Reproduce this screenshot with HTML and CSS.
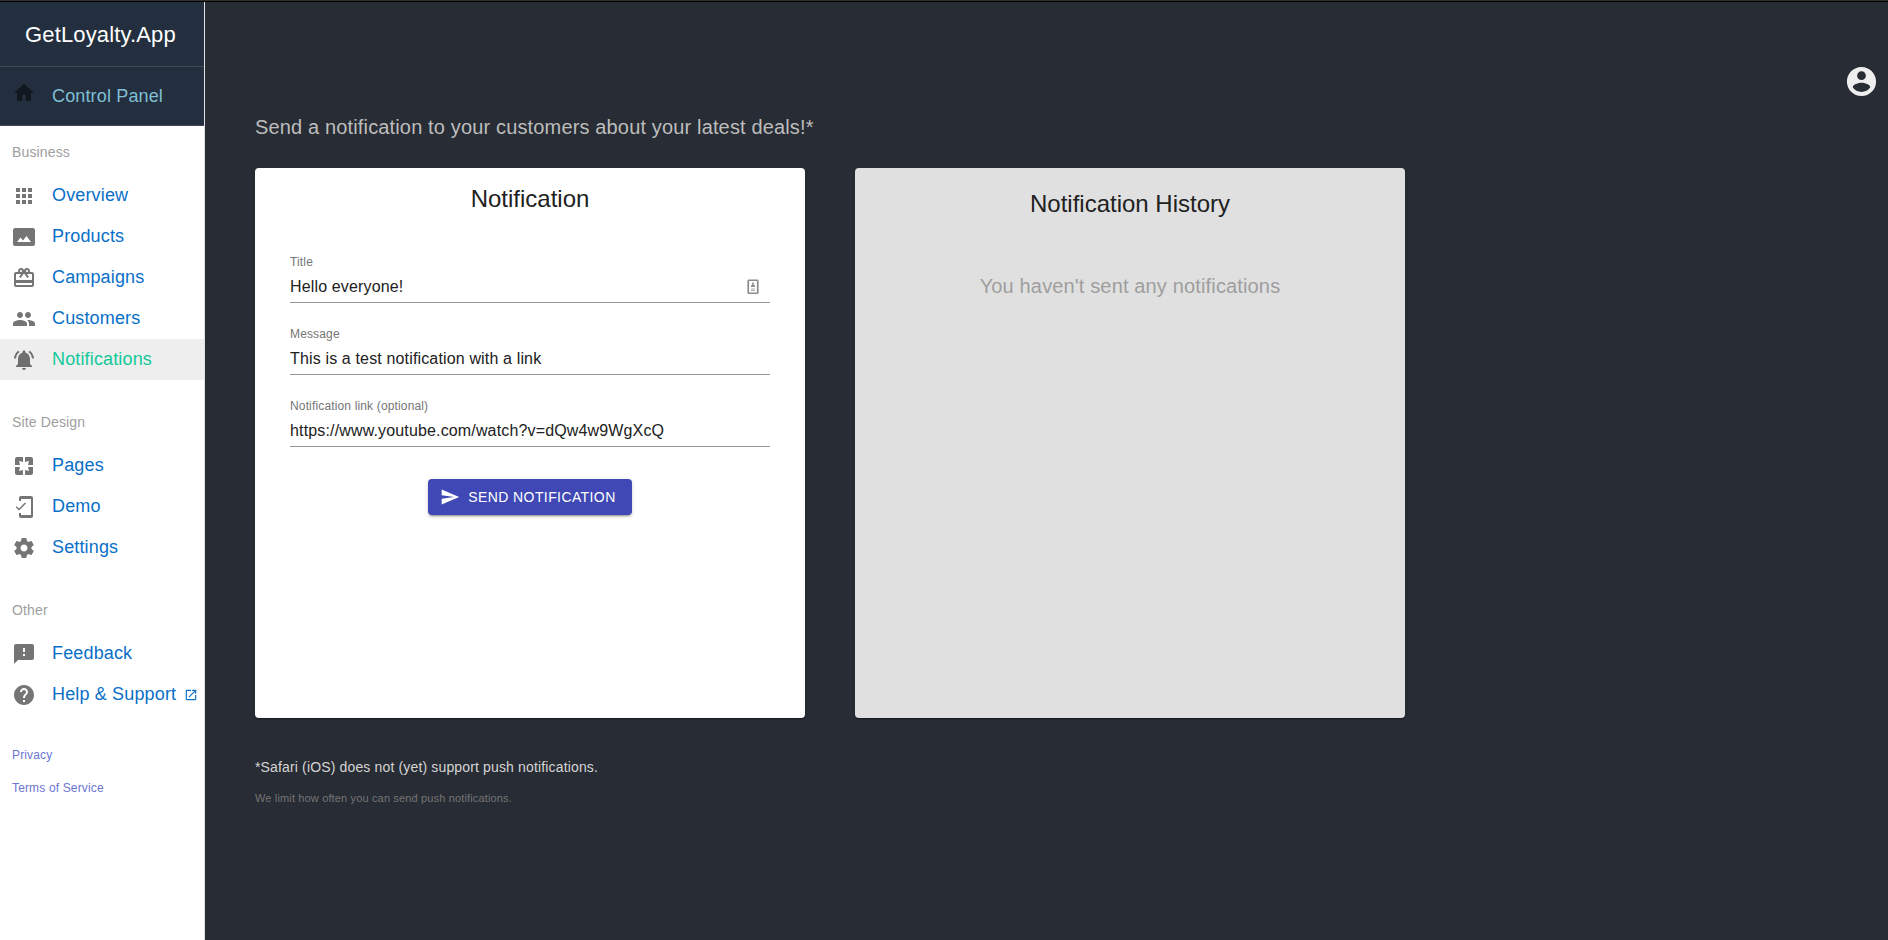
FILE: index.html
```html
<!DOCTYPE html>
<html lang="en">
<head>
<meta charset="utf-8">
<title>GetLoyalty.App</title>
<link rel="stylesheet" href="styles.css">
</head>
<body>
<div class="app">
  <aside class="sidebar">
    <div class="brand">GetLoyalty.App</div>
    <a class="panel-link"><svg class="icon home" viewBox="0 0 24 24"><path d="M10 20v-6h4v6h5v-8h3L12 3 2 12h3v8z"/></svg><span>Control Panel</span></a>
    <nav>
      <section class="group">
        <h2 class="group-title">Business</h2>
        <a class="item"><svg class="icon" viewBox="0 0 24 24"><path d="M4 8h4V4H4v4zm6 12h4v-4h-4v4zm-6 0h4v-4H4v4zm0-6h4v-4H4v4zm6 0h4v-4h-4v4zm6-10v4h4V4h-4zm-6 4h4V4h-4v4zm6 6h4v-4h-4v4zm0 6h4v-4h-4v4z"/></svg><span>Overview</span></a>
        <a class="item"><svg class="icon" viewBox="0 0 24 24"><path d="M21 3H3C2 3 1 4 1 5v14c0 1.1.9 2 2 2h18c1 0 2-1 2-2V5c0-1-1-2-2-2zM5 17l3.5-4.5 2.5 3.01L14.5 11l4.5 6H5z"/></svg><span>Products</span></a>
        <a class="item"><svg class="icon" viewBox="0 0 24 24"><path d="M20 6h-2.18c.11-.31.18-.65.18-1 0-1.66-1.34-3-3-3-1.05 0-1.96.54-2.5 1.35l-.5.67-.5-.68C10.960 2.540 10.050 2 9 2 7.340 2 6 3.340 6 5c0 .35.070.69.180 1H4c-1.110 0-1.990.890-1.990 2L2 19c0 1.110.890 2 2 2h16c1.110 0 2-.890 2-2V8c0-1.110-.890-2-2-2zm-5-2c.550 0 1 .450 1 1s-.450 1-1 1-1-.450-1-1 .450-1 1-1zM9 4c.550 0 1 .450 1 1s-.450 1-1 1-1-.450-1-1 .450-1 1-1zm11 15H4v-2h16v2zm0-5H4V8h5.080L7 10.830 8.620 12 11 8.760l1-1.360 1 1.360L15.380 12 17 10.830 14.920 8H20v6z"/></svg><span>Campaigns</span></a>
        <a class="item"><svg class="icon" viewBox="0 0 24 24"><path d="M16 11c1.660 0 2.990-1.340 2.990-3S17.660 5 16 5s-3 1.340-3 3 1.340 3 3 3zm-8 0c1.660 0 2.990-1.340 2.990-3S9.660 5 8 5 5 6.340 5 8s1.340 3 3 3zm0 2c-2.330 0-7 1.170-7 3.500V19h14v-2.500c0-2.330-4.670-3.500-7-3.500zm8 0c-.29 0-.62.02-.97.050 1.160.84 1.970 1.970 1.970 3.450V19h6v-2.500c0-2.330-4.670-3.500-7-3.500z"/></svg><span>Customers</span></a>
        <a class="item active"><svg class="icon" viewBox="0 0 24 24"><path d="M7.580 4.080L6.150 2.650C3.750 4.480 2.170 7.300 2.030 10.500h2c.15-2.650 1.510-4.970 3.550-6.420zm12.390 6.420h2c-.15-3.200-1.730-6.020-4.120-7.850l-1.420 1.430c2.020 1.450 3.390 3.770 3.540 6.420zM18 11c0-3.070-1.640-5.640-4.500-6.320V4c0-.83-.67-1.500-1.500-1.500s-1.500.67-1.500 1.500v.68C7.630 5.360 6 7.920 6 11v5l-2 2v1h16v-1l-2-2v-5zm-6 11c.14 0 .27-.010.40-.040.650-.140 1.180-.580 1.440-1.180.1-.240.150-.5.150-.780h-4c.010 1.100.9 2 2.010 2z"/></svg><span>Notifications</span></a>
      </section>
      <section class="group">
        <h2 class="group-title">Site Design</h2>
        <a class="item"><svg class="icon" viewBox="0 0 24 24"><path d="M3 5v6h5L7 7l4 1V3H5c-1.100 0-2 .9-2 2zm5 8H3v6c0 1.100.9 2 2 2h6v-5l-4 1 1-4zm9 4l-4-1v5h6c1.100 0 2-.9 2-2v-6h-5l1 4zm2-14h-6v5l4-1-1 4h5V5c0-1.100-.9-2-2-2z"/></svg><span>Pages</span></a>
        <a class="item"><svg class="icon" viewBox="0 0 24 24"><path d="M19 1H9c-1.100 0-2 .9-2 2v3h2V4h10v16H9v-2H7v3c0 1.100.9 2 2 2h10c1.100 0 2-.9 2-2V3c0-1.100-.9-2-2-2zM7.010 13.470l-2.210-2.210L3.750 12.320 7 15.500l7-7-1.060-1.060z"/></svg><span>Demo</span></a>
        <a class="item"><svg class="icon" viewBox="0 0 24 24"><path d="M19.430 12.980c.04-.32.07-.64.07-.98s-.03-.66-.07-.98l2.110-1.650c.19-.15.24-.42.12-.64l-2-3.460c-.12-.22-.39-.3-.61-.22l-2.490 1c-.52-.4-1.080-.73-1.690-.98l-.38-2.650C14.460 2.180 14.250 2 14 2h-4c-.25 0-.46.18-.49.42l-.38 2.650c-.61.25-1.170.59-1.690.98l-2.490-1c-.23-.09-.49 0-.61.22l-2 3.460c-.13.22-.07.49.12.64l2.110 1.650c-.04.32-.07.65-.07.98s.03.66.07.98l-2.110 1.650c-.19.15-.24.42-.12.64l2 3.460c.12.22.39.3.61.22l2.490-1c.52.4 1.080.73 1.690.98l.38 2.650c.03.24.24.42.49.42h4c.25 0 .46-.18.49-.42l.38-2.650c.61-.25 1.170-.59 1.690-.98l2.490 1c.23.09.49 0 .61-.22l2-3.460c.12-.22.07-.49-.12-.64l-2.110-1.650zM12 15.500c-1.930 0-3.500-1.570-3.500-3.500s1.570-3.500 3.500-3.500 3.500 1.570 3.500 3.500-1.570 3.500-3.500 3.500z"/></svg><span>Settings</span></a>
      </section>
      <section class="group">
        <h2 class="group-title">Other</h2>
        <a class="item"><svg class="icon" viewBox="0 0 24 24"><path d="M20 2H4c-1.100 0-1.990.9-1.990 2L2 22l4-4h14c1.100 0 2-.9 2-2V4c0-1.100-.9-2-2-2zm-7 12h-2v-2h2v2zm0-4h-2V6h2v4z"/></svg><span>Feedback</span></a>
        <a class="item"><svg class="icon" viewBox="0 0 24 24"><path d="M12 2C6.480 2 2 6.480 2 12s4.480 10 10 10 10-4.480 10-10S17.520 2 12 2zm1 17h-2v-2h2v2zm2.070-7.750l-.9.920C13.450 12.900 13 13.500 13 15h-2v-.5c0-1.100.45-2.100 1.170-2.830l1.240-1.260c.37-.36.59-.86.59-1.410 0-1.100-.9-2-2-2s-2 .9-2 2H8c0-2.210 1.790-4 4-4s4 1.790 4 4c0 .88-.36 1.680-.93 2.250z"/></svg><span>Help &amp; Support</span><svg class="launch" viewBox="0 0 24 24"><path d="M19 19H5V5h7V3H5c-1.110 0-2 .9-2 2v14c0 1.100.89 2 2 2h14c1.100 0 2-.9 2-2v-7h-2v7zM14 3v2h3.590l-9.830 9.830 1.410 1.410L19 6.410V10h2V3h-7z"/></svg></a>
      </section>
    </nav>
    <div class="legal"><a>Privacy</a><a>Terms of Service</a></div>
  </aside>
  <main class="main">
    <header class="topbar"><svg class="account" viewBox="0 0 24 24"><path d="M12 2C6.480 2 2 6.480 2 12s4.480 10 10 10 10-4.480 10-10S17.520 2 12 2zm0 3c1.660 0 3 1.340 3 3s-1.340 3-3 3-3-1.340-3-3 1.340-3 3-3zm0 14.200c-2.500 0-4.710-1.280-6-3.220.03-1.990 4-3.080 6-3.080 1.990 0 5.970 1.090 6 3.080-1.290 1.940-3.500 3.220-6 3.220z"/></svg></header>
    <h1 class="lead">Send a notification to your customers about your latest deals!*</h1>
    <div class="cards">
      <section class="card compose">
        <h2 class="card-title">Notification</h2>
        <form class="form">
          <div class="field"><div class="label">Title</div><div class="value"><span>Hello everyone!</span><svg class="contact" viewBox="0 0 12 16"><rect x="1.250" y="1.250" width="9.500" height="13" rx=".6" fill="none" stroke="#8c8c8c" stroke-width="1.700"/><path d="M5.200 3.500h1.600v2.200l1.200.8v1.500H4V6.500l1.200-.8z"/><path d="M4 9.500h4v1H4zM4 11h4v1H4z" opacity=".7"/></svg></div></div>
          <div class="field"><div class="label">Message</div><div class="value"><span>This is a test notification with a link</span></div></div>
          <div class="field"><div class="label">Notification link (optional)</div><div class="value"><span>https://www.youtube.com/watch?v=dQw4w9WgXcQ</span></div></div>
        </form>
        <button class="send" type="button"><svg viewBox="0 0 24 24"><path d="M2.010 21L23 12 2.010 3 2 10l15 2-15 2z"/></svg>SEND NOTIFICATION</button>
      </section>
      <section class="card history">
        <h2 class="card-title">Notification History</h2>
        <p class="empty">You haven't sent any notifications</p>
      </section>
    </div>
    <p class="note">*Safari (iOS) does not (yet) support push notifications.</p>
    <p class="limit">We limit how often you can send push notifications.</p>
  </main>
</div>
</body>
</html>
```

FILE: styles.css
```css
* { box-sizing: border-box; }
body {
  margin: 0;
  font-family: "Liberation Sans", Arial, sans-serif;
  letter-spacing: .00938em;
  background: #282c34;
  border-top: 1px solid #30312e;
}
h1, h2, p { margin: 0; font-weight: 400; }
.app { display: flex; height: 939px; border-top: 1px solid #000; overflow: hidden; }

.sidebar { flex: 0 0 205px; background: #fff; border-right: 1px solid #e0e0e0; }
.brand {
  height: 65px;
  padding-left: 25px;
  background: #232f3e;
  border-bottom: 1px solid #404854;
  color: #fff;
  font-size: 22px;
  line-height: 65px;
}
.panel-link {
  display: flex;
  height: 59px;
  padding: 0 12px;
  gap: 16px;
  background: #232f3e;
  border-bottom: 1px solid #404854;
  color: #80bfd4;
  font-size: 18px;
  line-height: 58px;
}
.icon { flex: none; width: 24px; height: 24px; fill: #757575; }
.icon.home { margin-top: 14px; fill: #11181f; }
.group { padding-bottom: 17px; }
.group:first-child { padding-top: 1px; }
.group-title { height: 48px; padding-left: 12px; color: #9e9e9e; font-size: 14px; line-height: 50px; }
.item {
  display: flex;
  align-items: center;
  height: 41px;
  padding: 1px 0 0 12px;
  gap: 16px;
  color: #0a6fc9;
  font-size: 18px;
  line-height: 24px;
  white-space: nowrap;
}
.item span { margin-top: -3px; }
.active { background: #eee; color: #13c99a; }
.active .icon { fill: #6e6e6e; }
.launch { width: 14px; height: 14px; margin-left: -8px; fill: #0a6fc9; }
.legal {
  display: flex;
  flex-direction: column;
  padding: 7px 12px;
  color: #6c76d0;
  font-size: 12px;
  line-height: 33px;
}

.main { flex: 1; padding-left: 50px; }
.topbar { display: flex; justify-content: flex-end; height: 105px; padding: 62px 9px 0 0; }
.account { width: 35px; height: 35px; fill: #eee; }
.lead { color: #bdbdbd; font-size: 20px; line-height: 40px; letter-spacing: .0075em; }
.cards { display: flex; gap: 50px; margin-top: 21px; }
.card {
  display: flex;
  flex-direction: column;
  width: 550px;
  height: 550px;
  padding: 15px 35px;
  border-radius: 4px;
  background: #fff;
  box-shadow: 0 2px 1px -1px rgba(0,0,0,.2), 0 1px 1px rgba(0,0,0,.14), 0 1px 3px rgba(0,0,0,.12);
  color: #212121;
}
.history { padding-top: 20px; background: #e0e0e0; }
.card-title { font-size: 24px; line-height: 32px; letter-spacing: 0; text-align: center; }
.form { display: flex; flex-direction: column; gap: 23px; margin-top: 39px; }
.field { height: 49px; border-bottom: 1px solid #949494; }
.label { color: #757575; font-size: 12px; line-height: 16px; }
.value {
  display: flex;
  justify-content: space-between;
  align-items: center;
  height: 32px;
  padding: 1px 11px 0 0;
  font-size: 16px;
  line-height: 19px;
}
.contact { width: 12px; height: 16px; fill: #8c8c8c; }
.send {
  display: flex;
  align-items: center;
  align-self: center;
  height: 36px;
  margin-top: 32px;
  padding: 0 16px 0 12px;
  gap: 8px;
  border: 0;
  border-radius: 4px;
  background: #3f48b5;
  box-shadow: 0 3px 1px -2px rgba(0,0,0,.2), 0 2px 2px rgba(0,0,0,.14), 0 1px 5px rgba(0,0,0,.12);
  color: #fff;
  font: 14px "Liberation Sans", Arial, sans-serif;
  letter-spacing: .02857em;
}
.send svg { width: 20px; height: 20px; fill: #fff; }
.empty { margin-top: 50px; color: #9e9e9e; font-size: 20px; line-height: 32px; letter-spacing: .0075em; text-align: center; }
.note { margin-top: 38px; color: #d5d5d5; font-size: 14px; line-height: 22px; letter-spacing: .01071em; }
.limit { margin-top: 10px; color: #757575; font-size: 11px; line-height: 20px; }
```
